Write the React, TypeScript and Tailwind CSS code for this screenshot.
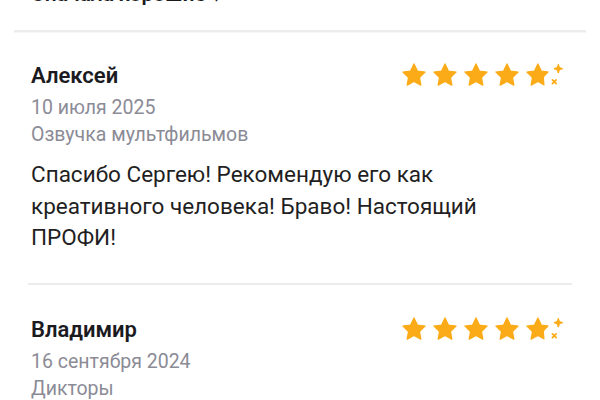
import React from 'react';

interface Review {
  name: string;
  date: string;
  service: string;
  text?: string;
}

const reviews: Review[] = [
  {
    name: 'Алексей',
    date: '10 июля 2025',
    service: 'Озвучка мультфильмов',
    text: 'Спасибо Сергею! Рекомендую его как креативного человека! Браво! Настоящий ПРОФИ!',
  },
  {
    name: 'Владимир',
    date: '16 сентября 2024',
    service: 'Дикторы',
  },
];

const STAR = 'M12 1.8l3.1 6.6 7.1.9-5.2 5 1.3 7.1L12 18l-6.3 3.4 1.3-7.1-5.2-5 7.1-.9z';

const Star = () => (
  <svg width="26" height="26" viewBox="0 0 24 24">
    <path d={STAR} fill="#fbab18" stroke="#fbab18" strokeWidth="1.2" strokeLinejoin="round" />
  </svg>
);

// last star: cut on the right with a little sparkle next to it
const SparkleStar = () => (
  <svg width="43" height="26" viewBox="0 0 40 24">
    <defs>
      <clipPath id="cut">
        <path d="M0 0h22v9.5l-4 4v11H0z" />
      </clipPath>
    </defs>
    <path d={STAR} fill="#fbab18" stroke="#fbab18" strokeWidth="1.2" strokeLinejoin="round" clipPath="url(#cut)" />
    <path d="M31 2.5c.4 2.6 1 3.2 3.6 3.6-2.6.4-3.2 1-3.6 3.6-.4-2.6-1-3.2-3.6-3.6 2.6-.4 3.2-1 3.6-3.6z" fill="#fbab18" stroke="#fbab18" strokeWidth="1.4" strokeLinejoin="round" />
    <path d="M25.5 16.5l3.5 3.5M29 16.5l-3.5 3.5" stroke="#fbab18" strokeWidth="1.6" strokeLinecap="round" />
  </svg>
);

const Rating = () => (
  <div className="flex items-center gap-[5px]">
    <Star />
    <Star />
    <Star />
    <Star />
    <SparkleStar />
  </div>
);

const ReviewCard = ({ review, top }: { review: Review; top: string }) => (
  <div className={`px-[31px] pb-[29px] ${top}`}>
    <div className="flex items-start justify-between">
      <div>
        <div className="text-[22px] leading-[28px] font-semibold text-[#1b1b1f]">{review.name}</div>
        <div className="mt-[4px] text-[19.5px] leading-[27px] text-[#8b8b96]">{review.date}</div>
        <div className="text-[19.5px] leading-[27px] text-[#8b8b96]">{review.service}</div>
      </div>
      <div className="pr-[1px]">
        <Rating />
      </div>
    </div>
    {review.text && (
      <p className="mt-[11px] text-[22.5px] leading-[31.5px] text-[#1f1f23] pr-[60px]">{review.text}</p>
    )}
  </div>
);

export default function App() {
  return (
    <div
      className="w-[600px] h-[400px] overflow-hidden bg-white"
      style={{ fontFamily: 'Roboto, "Noto Sans", sans-serif' }}
    >
      <div className="-mt-[18px] px-[31px] text-[21px] leading-[24px] font-semibold text-[#1b1b1f]">
        Сначала хорошие ↓
      </div>
      <div className="mt-[24px] mx-[14px] h-[2px] bg-[#ececee] shadow-[0_1px_1px_rgba(0,0,0,0.04)]" />
      <ReviewCard review={reviews[0]} top="pt-[30px]" />
      <div className="mx-[28px] h-[2px] bg-[#ececee]" />
      <ReviewCard review={reviews[1]} top="pt-[31px]" />
    </div>
  );
}
